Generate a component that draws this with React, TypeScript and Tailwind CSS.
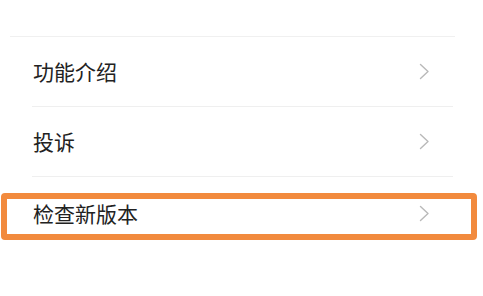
import React from "react";

const font = { fontFamily: '"Noto Sans CJK SC", "Noto Sans", sans-serif' };

function Chevron() {
    return (
        <svg width="11" height="17" viewBox="0 0 11 17" className="shrink-0">
            <polyline
                points="1.5,1.5 9,8.5 1.5,15.5"
                fill="none"
                stroke="#b9b9b9"
                strokeWidth="1.4"
                strokeLinecap="round"
                strokeLinejoin="round"
            />
        </svg>
    );
}

function Row({ label }: { label: string }) {
    return (
        <div className="ml-[32px] w-[421px] h-[70px] flex items-center justify-between border-b border-[#efefef] pr-[23px]">
            <span className="pl-[1px] text-[21px] leading-none text-[#222]">{label}</span>
            <Chevron />
        </div>
    );
}

export default function App() {
    return (
        <div className="w-[483px] h-[296px] bg-white overflow-hidden" style={font}>
            <div className="pt-[36px]">
                <div className="ml-[10px] w-[445px] h-px bg-[#f0f0f0]" />
                <Row label="功能介绍" />
                <Row label="投诉" />
                <div className="mt-[16px] ml-[1px] w-[476px] h-[47px] border-[6px] border-[#f28a3d] rounded-[4px] flex items-center justify-between pl-[26px] pr-[41px] pb-[6px]">
                    <span className="text-[21px] leading-none text-[#222]">检查新版本</span>
                    <Chevron />
                </div>
            </div>
        </div>
    );
}
